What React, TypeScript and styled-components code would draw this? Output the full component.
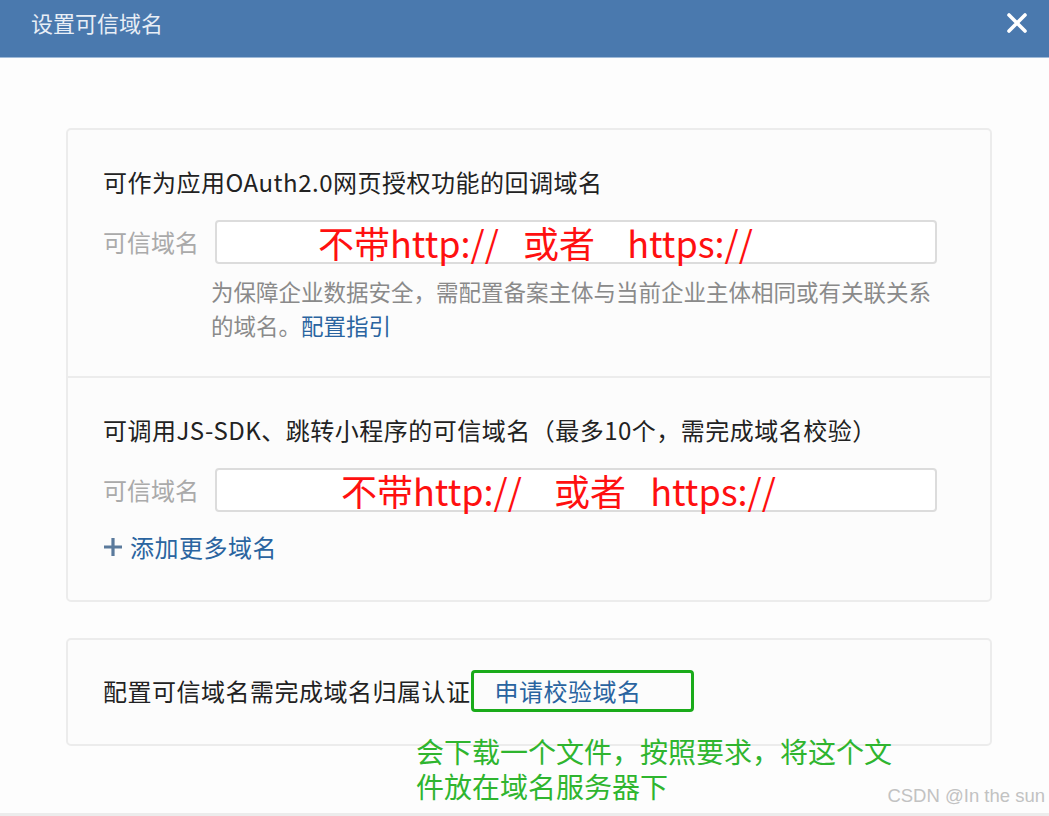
import styled, { createGlobalStyle } from 'styled-components';

const GlobalStyle = createGlobalStyle`
	html, body {
		margin: 0;
		padding: 0;
		background: #fdfdfd;
		overflow: hidden;
	}
	* {
		box-sizing: border-box;
	}
`;

const cjk = `"Noto Sans CJK SC", "Noto Sans", sans-serif`;

const Page = styled.div`
	position: relative;
	width: 1049px;
	height: 816px;
	border-bottom: 3px solid #ececec;
	font-family: ${cjk};
	color: #222;
`;

const Header = styled.div`
	height: 58px;
	background: #4a79ae;
	border-bottom: 1px solid #9fbad8;
	display: flex;
	align-items: flex-start;
	justify-content: space-between;
	padding: 6px 22px 0 31px;
`;

const Title = styled.div`
	font-size: 22px;
	line-height: 32px;
	color: #e8eef6;
`;

const CloseButton = styled.button`
	border: 0;
	background: none;
	padding: 0;
	margin-top: 7px;
	width: 20px;
	height: 20px;
	cursor: pointer;
	display: flex;
`;

const Content = styled.div`
	display: flex;
	flex-direction: column;
	gap: 36px;
	padding: 70px 57px 0 66px;
`;

const Card = styled.div`
	background: #fcfcfc;
	border: 2px solid #ececec;
	border-radius: 5px;
`;

const Section = styled.div<{ $top: number; $bottom: number }>`
	padding: ${(p) => p.$top}px 53px ${(p) => p.$bottom}px 35px;
	& + & {
		border-top: 2px solid #ececec;
	}
`;

const Heading = styled.div`
	font-size: 24px;
	line-height: 30px;
	letter-spacing: 0.5px;
	color: #222;
`;

const FieldRow = styled.div`
	display: flex;
	align-items: center;
	margin-top: 23px;
`;

const Label = styled.div`
	width: 112px;
	flex-shrink: 0;
	font-size: 24px;
	line-height: 30px;
	color: #aaa;
`;

const Input = styled.div<{ $indent: number }>`
	flex: 1;
	height: 44px;
	background: #fff;
	border: 2px solid #dcdcdc;
	border-radius: 4px;
	display: flex;
	align-items: center;
	padding-left: ${(p) => p.$indent}px;
`;

const RedNote = styled.span`
	font-size: 36px;
	line-height: 1;
	color: #ff1010;
	white-space: pre;
`;

const Hint = styled.div`
	margin: 10px 0 0 108px;
	font-size: 22.5px;
	line-height: 34px;
	color: #8a8a8a;
`;

const Link = styled.a`
	color: #2a64a0;
	text-decoration: none;
	cursor: pointer;
`;

const AddMore = styled.div`
	display: flex;
	align-items: center;
	gap: 7px;
	margin-top: 20px;
	font-size: 24px;
	line-height: 30px;
	letter-spacing: 0.5px;
	color: #2a64a0;
	cursor: pointer;
`;

const VerifyRow = styled.div`
	display: flex;
	align-items: center;
	padding: 30px 35px 32px;
	font-size: 24px;
	line-height: 30px;
	letter-spacing: 0.5px;
`;

const VerifyBox = styled.div`
	width: 223px;
	height: 42px;
	border: 3px solid #1aab1a;
	border-radius: 4px;
	display: flex;
	align-items: center;
	padding-left: 21px;
`;

const Annotation = styled.div`
	position: absolute;
	left: 416px;
	top: 734px;
	font-size: 28px;
	line-height: 35px;
	color: #2fb52f;
`;

const Watermark = styled.div`
	position: absolute;
	right: 4px;
	bottom: 6px;
	font-family: "Liberation Sans", Arial, sans-serif;
	font-size: 18.5px;
	color: #c2c2c2;
`;

function CloseIcon() {
	return (
		<svg width="20" height="20" viewBox="0 0 20 20">
			<path d="M2 2 L18 18 M18 2 L2 18" stroke="#fff" strokeWidth="3.6" strokeLinecap="round" />
		</svg>
	);
}

function PlusIcon() {
	return (
		<svg width="20" height="20" viewBox="0 0 20 20">
			<path d="M10 1 V19 M1 10 H19" stroke="#5a7a9c" strokeWidth="3.2" />
		</svg>
	);
}

function App(): JSX.Element {
	return (
		<Page>
			<GlobalStyle />
			<Header>
				<Title>设置可信域名</Title>
				<CloseButton aria-label="关闭">
					<CloseIcon />
				</CloseButton>
			</Header>
			<Content>
				<Card>
					<Section $top={37} $bottom={34}>
						<Heading>可作为应用OAuth2.0网页授权功能的回调域名</Heading>
						<FieldRow>
							<Label>可信域名</Label>
							<Input $indent={101}>
								<RedNote>{'不带http://   或者    https://'}</RedNote>
							</Input>
						</FieldRow>
						<Hint>
							为保障企业数据安全，需配置备案主体与当前企业主体相同或有关联关系的域名。<Link>配置指引</Link>
						</Hint>
					</Section>
					<Section $top={37} $bottom={38}>
						<Heading>可调用JS-SDK、跳转小程序的可信域名（最多10个，需完成域名校验）</Heading>
						<FieldRow>
							<Label>可信域名</Label>
							<Input $indent={124}>
								<RedNote>{'不带http://    或者   https://'}</RedNote>
							</Input>
						</FieldRow>
						<AddMore>
							<PlusIcon />
							添加更多域名
						</AddMore>
					</Section>
				</Card>
				<Card>
					<VerifyRow>
						配置可信域名需完成域名归属认证
						<VerifyBox>
							<Link>申请校验域名</Link>
						</VerifyBox>
					</VerifyRow>
				</Card>
			</Content>
			<Annotation>
				会下载一个文件，按照要求，将这个文
				<br />
				件放在域名服务器下
			</Annotation>
			<Watermark>CSDN @In the sun</Watermark>
		</Page>
	);
}

export default App;
